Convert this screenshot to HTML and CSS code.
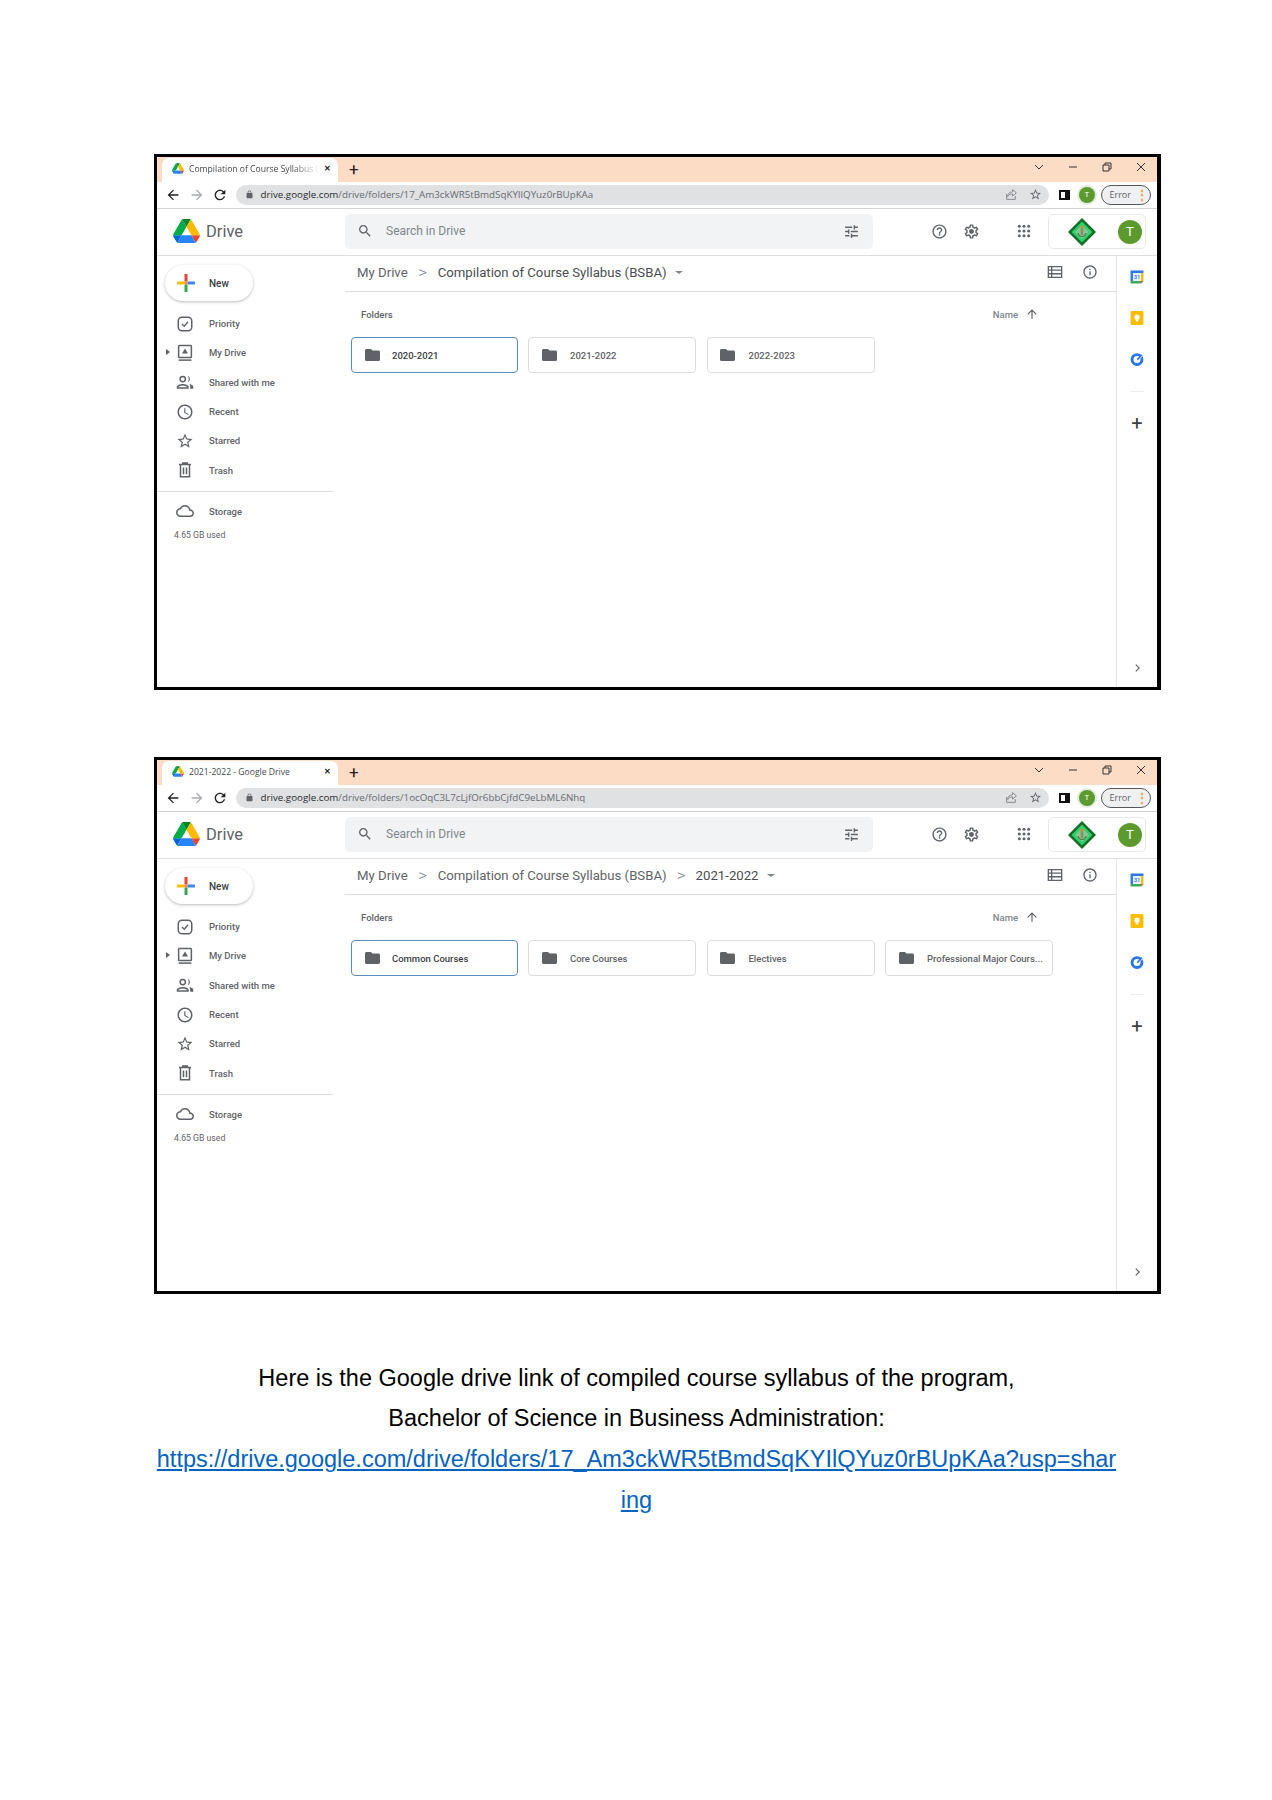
FILE: index.html
```html
<!DOCTYPE html>
<html lang="en">
<head>
    <meta charset="UTF-8">
    <meta name="viewport" content="width=device-width, initial-scale=1.0">
    <title>Course Syllabus</title>
    <link rel="stylesheet" href="styles.css">
</head>
<body>
    <!-- Shared icons -->
    <svg class="icon-defs" xmlns="http://www.w3.org/2000/svg">
        <symbol id="i-drive" viewBox="0 0 87.3 78">
            <path d="m6.6 66.85 3.85 6.65c.8 1.4 1.95 2.5 3.3 3.3l13.75-23.8h-27.5c0 1.55.4 3.1 1.2 4.5z" fill="#0066da"/>
            <path d="m43.65 25-13.75-23.8c-1.35.8-2.5 1.9-3.3 3.3l-25.4 44a9.06 9.06 0 0 0 -1.2 4.5h27.5z" fill="#00ac47"/>
            <path d="m73.55 76.8c1.35-.8 2.5-1.9 3.3-3.3l1.6-2.75 7.65-13.25c.8-1.4 1.2-2.95 1.2-4.5h-27.502l5.852 11.5z" fill="#ea4335"/>
            <path d="m43.65 25 13.75-23.8c-1.35-.8-2.9-1.2-4.5-1.2h-18.5c-1.6 0-3.15.45-4.5 1.2z" fill="#00832d"/>
            <path d="m59.8 53h-32.3l-13.75 23.8c1.35.8 2.9 1.2 4.5 1.2h50.8c1.6 0 3.15-.45 4.5-1.2z" fill="#2684fc"/>
            <path d="m73.4 26.5-12.7-22c-.8-1.4-1.95-2.5-3.3-3.3l-13.75 23.8 16.15 28h27.45c0-1.55-.4-3.1-1.2-4.5z" fill="#ffba00"/>
        </symbol>
        <symbol id="i-back" viewBox="0 0 24 24"><path d="M20 11H7.83l5.59-5.59L12 4l-8 8 8 8 1.41-1.41L7.83 13H20v-2z"/></symbol>
        <symbol id="i-forward" viewBox="0 0 24 24"><path d="M12 4l-1.41 1.41L16.17 11H4v2h12.17l-5.58 5.59L12 20l8-8z"/></symbol>
        <symbol id="i-reload" viewBox="0 0 24 24"><path d="M17.65 6.35C16.2 4.9 14.21 4 12 4c-4.42 0-7.99 3.58-7.99 8s3.57 8 7.99 8c3.73 0 6.84-2.55 7.73-6h-2.08c-.82 2.33-3.04 4-5.65 4-3.31 0-6-2.69-6-6s2.69-6 6-6c1.66 0 3.14.69 4.22 1.78L13 11h7V4l-2.35 2.35z"/></symbol>
        <symbol id="i-lock" viewBox="0 0 24 24"><path d="M18 8h-1V6c0-2.76-2.24-5-5-5S7 3.24 7 6v2H6c-1.1 0-2 .9-2 2v10c0 1.1.9 2 2 2h12c1.1 0 2-.9 2-2V10c0-1.1-.9-2-2-2zM9 6c0-1.66 1.34-3 3-3s3 1.34 3 3v2H9V6z"/></symbol>
        <symbol id="i-share" viewBox="0 0 24 24"><path d="M3 11v10h16v-6M14 3l7 6-7 6v-4c-4 0-7 1-9 5 0-6 3-8 9-9z" fill="none" stroke="currentColor" stroke-width="1.8"/></symbol>
        <symbol id="i-star" viewBox="0 0 24 24"><path d="M22 9.24l-7.19-.62L12 2 9.19 8.63 2 9.24l5.46 4.73L5.82 21 12 17.27 18.18 21l-1.63-7.03L22 9.24zM12 15.4l-3.76 2.27 1-4.28-3.32-2.88 4.38-.38L12 6.1l1.71 4.04 4.38.38-3.32 2.88 1 4.28L12 15.4z"/></symbol>
        <symbol id="i-search" viewBox="0 0 24 24"><path d="M15.5 14h-.79l-.28-.27C15.41 12.59 16 11.11 16 9.5 16 5.91 13.09 3 9.5 3S3 5.91 3 9.5 5.91 16 9.5 16c1.61 0 3.09-.59 4.23-1.57l.27.28v.79l5 4.99L20.49 19l-4.99-5zm-6 0C7.01 14 5 11.99 5 9.5S7.01 5 9.5 5 14 7.01 14 9.5 11.99 14 9.5 14z"/></symbol>
        <symbol id="i-tune" viewBox="0 0 24 24"><path d="M3 17v2h6v-2H3zM3 5v2h10V5H3zm10 16v-2h8v-2h-8v-2h-2v6h2zM7 9v2H3v2h4v2h2V9H7zm14 4v-2H11v2h10zm-6-4h2V7h4V5h-4V3h-2v6z"/></symbol>
        <symbol id="i-help" viewBox="0 0 24 24"><path d="M11 18h2v-2h-2v2zm1-16C6.48 2 2 6.48 2 12s4.48 10 10 10 10-4.48 10-10S17.52 2 12 2zm0 18c-4.41 0-8-3.59-8-8s3.59-8 8-8 8 3.59 8 8-3.59 8-8 8zm0-14c-2.21 0-4 1.79-4 4h2c0-1.1.9-2 2-2s2 .9 2 2c0 2-3 1.75-3 5h2c0-2.25 3-2.5 3-5 0-2.21-1.79-4-4-4z"/></symbol>
        <symbol id="i-gear" viewBox="0 0 24 24"><path d="M19.43 12.98c.04-.32.07-.64.07-.98 0-.34-.03-.66-.07-.98l2.11-1.65c.19-.15.24-.42.12-.64l-2-3.46c-.09-.16-.26-.25-.44-.25-.06 0-.12.01-.17.03l-2.49 1c-.52-.4-1.08-.73-1.69-.98l-.38-2.65C14.46 2.18 14.25 2 14 2h-4c-.25 0-.46.18-.49.42l-.38 2.65c-.61.25-1.17.59-1.69.98l-2.49-1c-.06-.02-.12-.03-.18-.03-.17 0-.34.09-.43.25l-2 3.46c-.13.22-.07.49.12.64l2.11 1.65c-.04.32-.07.65-.07.98 0 .33.03.66.07.98l-2.11 1.65c-.19.15-.24.42-.12.64l2 3.46c.09.16.26.25.44.25.06 0 .12-.01.17-.03l2.49-1c.52.4 1.08.73 1.69.98l.38 2.65c.03.24.24.42.49.42h4c.25 0 .46-.18.49-.42l.38-2.65c.61-.25 1.17-.59 1.69-.98l2.49 1c.06.02.12.03.18.03.17 0 .34-.09.43-.25l2-3.46c.12-.22.07-.49-.12-.64l-2.11-1.65zm-1.98-1.71c.04.31.05.52.05.73 0 .21-.02.43-.05.73l-.14 1.13.89.7 1.08.84-.7 1.21-1.27-.51-1.04-.42-.9.68c-.43.32-.84.56-1.25.73l-1.06.43-.16 1.13-.2 1.35h-1.4l-.19-1.35-.16-1.13-1.06-.43c-.43-.18-.83-.41-1.23-.71l-.91-.7-1.06.43-1.27.51-.7-1.21 1.08-.84.89-.7-.14-1.13c-.03-.31-.05-.54-.05-.74s.02-.43.05-.73l.14-1.13-.89-.7-1.08-.84.7-1.21 1.27.51 1.04.42.9-.68c.43-.32.84-.56 1.25-.73l1.06-.43.16-1.13.2-1.35h1.39l.19 1.35.16 1.13 1.06.43c.43.18.83.41 1.23.71l.91.7 1.06-.43 1.27-.51.7 1.21-1.07.85-.89.7.14 1.13zM12 8.5a3.5 3.5 0 1 0 0 7 3.5 3.5 0 0 0 0-7z"/></symbol>
        <symbol id="i-apps" viewBox="0 0 24 24">
            <circle cx="4" cy="4" r="2.6"/><circle cx="12" cy="4" r="2.6"/><circle cx="20" cy="4" r="2.6"/>
            <circle cx="4" cy="12" r="2.6"/><circle cx="12" cy="12" r="2.6"/><circle cx="20" cy="12" r="2.6"/>
            <circle cx="4" cy="20" r="2.6"/><circle cx="12" cy="20" r="2.6"/><circle cx="20" cy="20" r="2.6"/>
        </symbol>
        <symbol id="i-badge" viewBox="0 0 28 28">
            <path d="M14 0l14 14-14 14L0 14z" fill="#146c25"/>
            <path d="M14 3.500L24.500 14 14 24.500 3.500 14z" fill="#2bd06a"/>
            <path d="M14 7l7 7-7 7-7-7z" fill="#7fc98f"/>
            <path d="M12.700 9.500h2.600v7.500h-2.600z" fill="#8e8a66"/>
            <path d="M10 15c.5 2.500 2 3.500 4 3.500s3.500-1 4-3.500" fill="none" stroke="#5f6f4a" stroke-width="1.200"/>
            <circle cx="14" cy="9" r="1.500" fill="#e08a1e"/>
        </symbol>
        <symbol id="i-plus" viewBox="0 0 24 24">
            <path d="M14 14v10h-4V14z" fill="#34a853"/>
            <path d="M10 10V0h4v10z" fill="#ea4335"/>
            <path d="M10 10H0v4h10z" fill="#fbbc04"/>
            <path d="M14 10h10v4H14z" fill="#4285f4"/>
            <path d="M10 10h4v4h-4z" fill="#ea8a35"/>
        </symbol>
        <symbol id="i-priority" viewBox="0 0 24 24"><rect x="3" y="3" width="18" height="18" rx="5" fill="none" stroke="currentColor" stroke-width="2"/><path d="M8 12l3 3 5-6" fill="none" stroke="currentColor" stroke-width="1.800"/></symbol>
        <symbol id="i-mydrive" viewBox="0 0 24 24"><rect x="3.500" y="2" width="17" height="16" rx="1" fill="none" stroke="currentColor" stroke-width="2"/><path d="M3.500 21.500h17" stroke="currentColor" stroke-width="2"/><path d="M12 6l4 6.500H8z"/></symbol>
        <symbol id="i-people" viewBox="0 0 24 24"><path d="M9 12.500a4.500 4.500 0 1 0 0-9 4.500 4.500 0 0 0 0 9zm0-7a2.500 2.500 0 1 1 0 5 2.500 2.500 0 0 1 0-5zM9 14.500c-3.200 0-8 1.600-8 4.200V21h16v-2.300c0-2.600-4.800-4.200-8-4.200zM3 19v-.3c.4-.8 3.400-2.200 6-2.200s5.600 1.400 6 2.200v.3zM15.500 3.600c1.900.5 3 2.400 3 4.400s-1.100 3.900-3 4.400c.9-1.100 1.500-2.700 1.500-4.400s-.6-3.300-1.500-4.400zM18 14.800c2.600.6 5 1.800 5 3.900V21h-4v-2.300c0-1.500-.3-2.800-1-3.900z"/></symbol>
        <symbol id="i-clock" viewBox="0 0 24 24"><path d="M11.990 2C6.470 2 2 6.480 2 12s4.470 10 9.990 10C17.520 22 22 17.520 22 12S17.520 2 11.990 2zM12 20c-4.420 0-8-3.580-8-8s3.580-8 8-8 8 3.580 8 8-3.580 8-8 8zm.5-13H11v6l5.250 3.150.75-1.230-4.500-2.670z"/></symbol>
        <symbol id="i-trash" viewBox="0 0 24 24"><path d="M4 4.500h16M9 4.500V2.500h6v2M6 4.500v16.500h12V4.500M10 8.500v9M14 8.500v9" fill="none" stroke="currentColor" stroke-width="2"/></symbol>
        <symbol id="i-cloud" viewBox="0 0 24 24"><path d="M19.350 10.040C18.670 6.590 15.640 4 12 4 9.110 4 6.600 5.640 5.350 8.040 2.340 8.360 0 10.910 0 14c0 3.310 2.690 6 6 6h13c2.760 0 5-2.240 5-5 0-2.640-2.050-4.780-4.650-4.960zM19 18H6c-2.210 0-4-1.790-4-4 0-2.050 1.530-3.760 3.560-3.970l1.070-.11.500-.95C8.080 7.140 9.940 6 12 6c2.620 0 4.880 1.860 5.390 4.430l.3 1.500 1.530.11c1.560.1 2.780 1.410 2.780 2.960 0 1.650-1.350 3-3 3z"/></symbol>
        <symbol id="i-folder" viewBox="0 0 20 16"><path d="M8 0H2C.9 0 0 .9 0 2v12c0 1.100.9 2 2 2h16c1.100 0 2-.9 2-2V4c0-1.100-.9-2-2-2h-8z"/></symbol>
        <symbol id="i-list" viewBox="0 0 24 24"><path d="M2 4h20v16H2zM2 9.300h20M2 14.600h20M7 4v16" fill="none" stroke="currentColor" stroke-width="2"/></symbol>
        <symbol id="i-info" viewBox="0 0 24 24"><path d="M11 7h2v2h-2zm0 4h2v6h-2zm1-9C6.480 2 2 6.480 2 12s4.480 10 10 10 10-4.480 10-10S17.520 2 12 2zm0 18c-4.410 0-8-3.590-8-8s3.590-8 8-8 8 3.590 8 8-3.590 8-8 8z"/></symbol>
        <symbol id="i-up" viewBox="0 0 24 24"><path d="M4 12l1.410 1.410L11 7.830V20h2V7.830l5.580 5.590L20 12l-8-8-8 8z"/></symbol>
        <symbol id="i-more" viewBox="0 0 24 24"><path d="M7 3l2.500-2.500L21 12 9.500 23.500 7 21l9-9z"/></symbol>
        <symbol id="i-calendar" viewBox="0 0 24 24">
            <path d="M1 1h22v22H1z" fill="#e8f0fe"/>
            <path d="M1 1h22v4H1zM1 5h4v14H1z" fill="#2a77e6"/>
            <path d="M19 5h4v14h-4z" fill="#fbbc04"/>
            <path d="M1 19h18v4H1z" fill="#34a853"/>
            <path d="M19 19h4l-4 4z" fill="#ea4335"/>
            <text x="12" y="16" text-anchor="middle" class="cal-day">31</text>
        </symbol>
        <symbol id="i-keep" viewBox="0 0 24 24">
            <rect x="1" y="0" width="22" height="24" rx="2" fill="#fbbc04"/>
            <circle cx="12" cy="10.500" r="4.500" fill="#fff"/>
            <path d="M10 15h4v3h-4z" fill="#fff"/>
        </symbol>
        <symbol id="i-tasks" viewBox="0 0 24 24">
            <circle cx="12" cy="13" r="8.500" fill="none" stroke="#2a77e6" stroke-width="5"/>
            <path d="M8 13l3.500 3.500L23 4" fill="none" stroke="#fff" stroke-width="2"/>
            <path d="M11.500 12l2 2 8-8.500-2-1.500z" fill="#2a77e6"/>
        </symbol>
    </svg>

    <div class="page">
        <!-- First screenshot -->
        <section class="frame">
            <div class="tab-strip">
                <div class="tab">
                    <svg class="tab-icon"><use href="#i-drive"/></svg>
                    <span class="tab-title tab-fade">Compilation of Course Syllabus (</span>
                    <span class="tab-close">✕</span>
                </div>
                <span class="new-tab">+</span>
                <div class="window-btns">
                    <svg class="win-icon" viewBox="0 0 12 12"><path d="M2 4l4 4 4-4"/></svg>
                    <svg class="win-icon" viewBox="0 0 12 12"><path d="M2 6h8"/></svg>
                    <svg class="win-icon" viewBox="0 0 12 12"><path d="M2 4h6v6H2zM4 4V2h6v6H8"/></svg>
                    <svg class="win-icon" viewBox="0 0 12 12"><path d="M2 2l8 8M10 2l-8 8"/></svg>
                </div>
            </div>
            <div class="toolbar">
                <svg class="nav-icon"><use href="#i-back"/></svg>
                <svg class="nav-icon off"><use href="#i-forward"/></svg>
                <svg class="nav-icon"><use href="#i-reload"/></svg>
                <div class="omnibox">
                    <svg class="lock-icon"><use href="#i-lock"/></svg>
                    <span class="url"><b>drive.google.com</b>/drive/folders/17_Am3ckWR5tBmdSqKYIlQYuz0rBUpKAa</span>
                    <svg class="omni-icon share"><use href="#i-share"/></svg>
                    <svg class="omni-icon"><use href="#i-star"/></svg>
                </div>
                <span class="side-panel"></span>
                <span class="chrome-avatar">T</span>
                <div class="error-pill">Error <span class="dots">⋮</span></div>
            </div>
            <header class="appbar">
                <div class="brand">
                    <svg class="drive-logo"><use href="#i-drive"/></svg>
                    <span>Drive</span>
                </div>
                <div class="search">
                    <svg class="search-icon"><use href="#i-search"/></svg>
                    <span class="search-text">Search in Drive</span>
                    <svg class="tune-icon"><use href="#i-tune"/></svg>
                </div>
                <svg class="bar-icon help"><use href="#i-help"/></svg>
                <svg class="bar-icon gear"><use href="#i-gear"/></svg>
                <svg class="bar-icon apps"><use href="#i-apps"/></svg>
                <div class="account">
                    <svg class="badge"><use href="#i-badge"/></svg>
                    <span class="avatar">T</span>
                </div>
            </header>
            <div class="workspace">
                <aside class="sidebar">
                    <div class="new-btn">
                        <svg class="plus-icon"><use href="#i-plus"/></svg>
                        <span>New</span>
                    </div>
                    <nav class="nav">
                        <a class="nav-item"><svg><use href="#i-priority"/></svg>Priority</a>
                        <a class="nav-item caret"><svg><use href="#i-mydrive"/></svg>My Drive</a>
                        <a class="nav-item"><svg><use href="#i-people"/></svg>Shared with me</a>
                        <a class="nav-item"><svg><use href="#i-clock"/></svg>Recent</a>
                        <a class="nav-item"><svg><use href="#i-star"/></svg>Starred</a>
                        <a class="nav-item"><svg><use href="#i-trash"/></svg>Trash</a>
                    </nav>
                    <div class="storage">
                        <a class="nav-item"><svg><use href="#i-cloud"/></svg>Storage</a>
                        <p class="used">4.65 GB used</p>
                    </div>
                </aside>
                <main class="content">
                    <div class="crumbs">
                        <span class="crumb">My Drive</span>
                        <span class="crumb-sep">&gt;</span>
                        <span class="crumb current">Compilation of Course Syllabus (BSBA)</span>
                        <span class="crumb-caret"></span>
                        <svg class="crumb-icon list"><use href="#i-list"/></svg>
                        <svg class="crumb-icon info"><use href="#i-info"/></svg>
                    </div>
                    <div class="list-head">
                        <span class="folders-label">Folders</span>
                        <span class="sort">Name <svg class="sort-icon"><use href="#i-up"/></svg></span>
                    </div>
                    <div class="folder-grid">
                        <div class="folder selected"><svg><use href="#i-folder"/></svg><span>2020-2021</span></div>
                        <div class="folder"><svg><use href="#i-folder"/></svg><span>2021-2022</span></div>
                        <div class="folder"><svg><use href="#i-folder"/></svg><span>2022-2023</span></div>
                    </div>
                </main>
                <aside class="rail">
                    <svg class="rail-icon"><use href="#i-calendar"/></svg>
                    <svg class="rail-icon"><use href="#i-keep"/></svg>
                    <svg class="rail-icon"><use href="#i-tasks"/></svg>
                    <span class="rail-sep"></span>
                    <span class="rail-plus">+</span>
                    <svg class="rail-more"><use href="#i-more"/></svg>
                </aside>
            </div>
        </section>

        <!-- Second screenshot -->
        <section class="frame tall">
            <div class="tab-strip">
                <div class="tab">
                    <svg class="tab-icon"><use href="#i-drive"/></svg>
                    <span class="tab-title">2021-2022 - Google Drive</span>
                    <span class="tab-close">✕</span>
                </div>
                <span class="new-tab">+</span>
                <div class="window-btns">
                    <svg class="win-icon" viewBox="0 0 12 12"><path d="M2 4l4 4 4-4"/></svg>
                    <svg class="win-icon" viewBox="0 0 12 12"><path d="M2 6h8"/></svg>
                    <svg class="win-icon" viewBox="0 0 12 12"><path d="M2 4h6v6H2zM4 4V2h6v6H8"/></svg>
                    <svg class="win-icon" viewBox="0 0 12 12"><path d="M2 2l8 8M10 2l-8 8"/></svg>
                </div>
            </div>
            <div class="toolbar">
                <svg class="nav-icon"><use href="#i-back"/></svg>
                <svg class="nav-icon off"><use href="#i-forward"/></svg>
                <svg class="nav-icon"><use href="#i-reload"/></svg>
                <div class="omnibox">
                    <svg class="lock-icon"><use href="#i-lock"/></svg>
                    <span class="url"><b>drive.google.com</b>/drive/folders/1ocOqC3L7cLjfOr6bbCjfdC9eLbML6Nhq</span>
                    <svg class="omni-icon share"><use href="#i-share"/></svg>
                    <svg class="omni-icon"><use href="#i-star"/></svg>
                </div>
                <span class="side-panel"></span>
                <span class="chrome-avatar">T</span>
                <div class="error-pill">Error <span class="dots">⋮</span></div>
            </div>
            <header class="appbar">
                <div class="brand">
                    <svg class="drive-logo"><use href="#i-drive"/></svg>
                    <span>Drive</span>
                </div>
                <div class="search">
                    <svg class="search-icon"><use href="#i-search"/></svg>
                    <span class="search-text">Search in Drive</span>
                    <svg class="tune-icon"><use href="#i-tune"/></svg>
                </div>
                <svg class="bar-icon help"><use href="#i-help"/></svg>
                <svg class="bar-icon gear"><use href="#i-gear"/></svg>
                <svg class="bar-icon apps"><use href="#i-apps"/></svg>
                <div class="account">
                    <svg class="badge"><use href="#i-badge"/></svg>
                    <span class="avatar">T</span>
                </div>
            </header>
            <div class="workspace">
                <aside class="sidebar">
                    <div class="new-btn">
                        <svg class="plus-icon"><use href="#i-plus"/></svg>
                        <span>New</span>
                    </div>
                    <nav class="nav">
                        <a class="nav-item"><svg><use href="#i-priority"/></svg>Priority</a>
                        <a class="nav-item caret"><svg><use href="#i-mydrive"/></svg>My Drive</a>
                        <a class="nav-item"><svg><use href="#i-people"/></svg>Shared with me</a>
                        <a class="nav-item"><svg><use href="#i-clock"/></svg>Recent</a>
                        <a class="nav-item"><svg><use href="#i-star"/></svg>Starred</a>
                        <a class="nav-item"><svg><use href="#i-trash"/></svg>Trash</a>
                    </nav>
                    <div class="storage">
                        <a class="nav-item"><svg><use href="#i-cloud"/></svg>Storage</a>
                        <p class="used">4.65 GB used</p>
                    </div>
                </aside>
                <main class="content">
                    <div class="crumbs">
                        <span class="crumb">My Drive</span>
                        <span class="crumb-sep">&gt;</span>
                        <span class="crumb">Compilation of Course Syllabus (BSBA)</span>
                        <span class="crumb-sep second">&gt;</span>
                        <span class="crumb current">2021-2022</span>
                        <span class="crumb-caret"></span>
                        <svg class="crumb-icon list"><use href="#i-list"/></svg>
                        <svg class="crumb-icon info"><use href="#i-info"/></svg>
                    </div>
                    <div class="list-head">
                        <span class="folders-label">Folders</span>
                        <span class="sort">Name <svg class="sort-icon"><use href="#i-up"/></svg></span>
                    </div>
                    <div class="folder-grid">
                        <div class="folder selected"><svg><use href="#i-folder"/></svg><span>Common Courses</span></div>
                        <div class="folder"><svg><use href="#i-folder"/></svg><span>Core Courses</span></div>
                        <div class="folder"><svg><use href="#i-folder"/></svg><span>Electives</span></div>
                        <div class="folder"><svg><use href="#i-folder"/></svg><span>Professional Major Cours...</span></div>
                    </div>
                </main>
                <aside class="rail">
                    <svg class="rail-icon"><use href="#i-calendar"/></svg>
                    <svg class="rail-icon"><use href="#i-keep"/></svg>
                    <svg class="rail-icon"><use href="#i-tasks"/></svg>
                    <span class="rail-sep"></span>
                    <span class="rail-plus">+</span>
                    <svg class="rail-more"><use href="#i-more"/></svg>
                </aside>
            </div>
        </section>

        <div class="note">
            <p>Here is the Google drive link of compiled course syllabus of the program,</p>
            <p>Bachelor of Science in Business Administration:</p>
            <p><a class="note-link">https://drive.google.com/drive/folders/17_Am3ckWR5tBmdSqKYIlQYuz0rBUpKAa?usp=sharing</a></p>
        </div>
    </div>
</body>
</html>
```

FILE: styles.css
```css
* {
    margin: 0;
    padding: 0;
    box-sizing: border-box;
}

body {
    font-family: 'Roboto', sans-serif;
    background: #fff;
    color: #5f6368;
}

.icon-defs {
    display: none;
}

.page {
    width: 1272px;
    min-height: 1800px;
    padding: 154px 111px 0 154px;
}

/* Screenshot frame */
.frame {
    width: 1007px;
    height: 536px;
    border: 3px solid #000;
    border-right-width: 4px;
    display: flex;
    flex-direction: column;
    margin-bottom: 67px;
    background: #fff;
}

.frame.tall {
    height: 537px;
    margin-bottom: 0;
}

.tab-strip {
    height: 25px;
    background: #fddcc6;
    display: flex;
    align-items: flex-end;
    padding-left: 5px;
    flex: none;
}

.tab {
    width: 176px;
    height: 24px;
    background: #fff;
    border-radius: 7px 7px 0 0;
    display: flex;
    align-items: center;
    padding: 0 0 3px 10px;
}

.tab-icon {
    width: 12px;
    height: 11px;
    flex: none;
}

.tab-title {
    font-family: 'Open Sans', sans-serif;
    font-size: 8.6px;
    color: #45494d;
    margin-left: 5px;
    width: 131px;
    white-space: nowrap;
}

.tab-fade {
    -webkit-mask-image: linear-gradient(to right, #000 80%, transparent 100%);
    mask-image: linear-gradient(to right, #000 80%, transparent 100%);
}

.tab-close {
    font-size: 8px;
    color: #222;
    margin-left: 4px;
    font-weight: bold;
}

.new-tab {
    font-size: 17px;
    font-weight: 400;
    color: #222;
    line-height: 22px;
    height: 24px;
    margin-left: 11px;
}

.window-btns {
    margin-left: auto;
    display: flex;
    align-items: center;
    gap: 22px;
    height: 19px;
    align-self: flex-start;
    padding-right: 10px;
}

.win-icon {
    width: 12px;
    height: 12px;
    fill: none;
    stroke: #333;
    stroke-width: 1;
}

.toolbar {
    height: 27px;
    border-bottom: 1px solid #d0d2d4;
    display: flex;
    align-items: center;
    padding: 0 5px 1px 8px;
    flex: none;
}

.nav-icon {
    width: 16px;
    height: 16px;
    fill: #222;
    margin-right: 7.5px;
    flex: none;
}

.nav-icon.off {
    fill: #a5a8ab;
}

.omnibox {
    width: 813px;
    height: 20px;
    background: #e0e1e2;
    border-radius: 10px;
    display: flex;
    align-items: center;
    padding: 0 7px 0 9px;
    flex: none;
}

.lock-icon {
    width: 9px;
    height: 9px;
    fill: #5f6368;
    flex: none;
}

.url {
    font-family: 'Open Sans', sans-serif;
    font-size: 9.77px;
    color: #676b70;
    margin-left: 7px;
    white-space: nowrap;
}

.url b {
    font-weight: 400;
    color: #2a2c2f;
}

.omni-icon {
    width: 13px;
    height: 13px;
    fill: #5f6368;
    margin-left: 11px;
    flex: none;
}

.omni-icon.share {
    margin-left: auto;
    color: #85888c;
}

.side-panel {
    width: 11px;
    height: 10px;
    border: 2px solid #111;
    border-right-width: 5px;
    margin-left: 10px;
    flex: none;
}

.chrome-avatar {
    width: 16px;
    height: 16px;
    border-radius: 50%;
    background: #5d9a2e;
    color: #fff;
    font-size: 8px;
    line-height: 16px;
    text-align: center;
    margin-left: 9.5px;
    box-shadow: 0 0 0 2px #e4ebe0;
    flex: none;
}

.error-pill {
    width: 50px;
    height: 20px;
    border: 1px solid #55585b;
    border-radius: 10px;
    background: #eef0f1;
    font-family: 'Open Sans', sans-serif;
    font-size: 9px;
    line-height: 18px;
    color: #5f6368;
    padding-left: 8px;
    margin-left: 5.5px;
    display: flex;
    justify-content: space-between;
    flex: none;
}

.dots {
    color: #e8a33a;
    font-weight: bold;
    font-size: 12px;
    padding-right: 2px;
}

/* Drive header */
.appbar {
    height: 47px;
    border-bottom: 1px solid #dcdee0;
    display: flex;
    align-items: center;
    padding-left: 16px;
    padding-bottom: 2px;
    flex: none;
}

.brand {
    width: 172px;
    display: flex;
    align-items: center;
    font-size: 16.5px;
    color: #5f6368;
    gap: 6px;
    flex: none;
}

.drive-logo {
    width: 27px;
    height: 24px;
}

.search {
    width: 528px;
    height: 35px;
    background: #f1f3f4;
    border-radius: 5px;
    display: flex;
    align-items: center;
    padding: 0 13px 0 12px;
    flex: none;
}

.search-icon {
    width: 16px;
    height: 16px;
    fill: #5f6368;
}

.search-text {
    font-size: 12px;
    color: #80868b;
    margin-left: 13px;
}

.tune-icon {
    width: 17px;
    height: 17px;
    fill: #5f6368;
    margin-left: auto;
}

.bar-icon {
    width: 17px;
    height: 17px;
    fill: #5f6368;
    flex: none;
}

.bar-icon.help {
    margin-left: 58px;
}

.bar-icon.gear {
    margin-left: 15px;
}

.bar-icon.apps {
    width: 14px;
    height: 14px;
    margin-left: 37px;
}

.account {
    width: 98px;
    height: 35px;
    border: 1px solid #e6e8ea;
    border-radius: 5px;
    margin-left: 17px;
    display: flex;
    align-items: center;
    padding: 2px 0 0 19px;
    flex: none;
}

.badge {
    width: 28px;
    height: 28px;
}

.avatar {
    width: 24px;
    height: 24px;
    border-radius: 50%;
    background: #5d9a2e;
    color: #fff;
    font-size: 13px;
    line-height: 24px;
    text-align: center;
    margin-left: 22px;
}

/* Workspace */
.workspace {
    flex: 1;
    display: flex;
    min-height: 0;
}

.sidebar {
    width: 176px;
    padding-top: 9px;
    flex: none;
}

.new-btn {
    width: 88px;
    height: 36px;
    margin-left: 8px;
    border-radius: 18px;
    background: #fff;
    box-shadow: 0 1px 3px rgba(60, 64, 67, 0.35);
    display: flex;
    align-items: center;
    padding-left: 12px;
    font-size: 10px;
    font-weight: 500;
    color: #3c4043;
}

.plus-icon {
    width: 18px;
    height: 18px;
    margin-right: 14px;
}

.nav {
    margin-top: 8px;
    padding-bottom: 6px;
    border-bottom: 1px solid #dcdee0;
}

.nav-item {
    height: 29.300px;
    display: flex;
    align-items: center;
    padding-left: 19px;
    font-size: 9.500px;
    font-weight: 500;
    color: #5f6368;
    position: relative;
}

.nav-item svg {
    width: 18px;
    height: 18px;
    fill: #5f6368;
    color: #5f6368;
    margin-right: 15px;
    flex: none;
}

.caret::before {
    content: "";
    position: absolute;
    left: 9px;
    top: 11px;
    border-left: 4px solid #5f6368;
    border-top: 3.500px solid transparent;
    border-bottom: 3.500px solid transparent;
}

.storage {
    padding-top: 5px;
}

.used {
    font-size: 8.700px;
    color: #5f6368;
    padding: 4px 0 0 17px;
}

.content {
    flex: 1;
    min-width: 0;
    padding-left: 12px;
}

.crumbs {
    height: 36px;
    border-bottom: 1px solid #dcdee0;
    display: flex;
    align-items: center;
    padding: 0 0 3px 12px;
}

.crumb {
    font-size: 13.200px;
    color: #5f6368;
}

.crumb.current {
    color: #4a4e52;
}

.crumb-sep {
    font-size: 17px;
    font-weight: 300;
    color: #7a7e83;
    width: 30px;
    text-align: center;
}

.crumb-sep.second {
    width: 29px;
}

.crumb-caret {
    margin-left: 8px;
    border-top: 3.500px solid #80868b;
    border-left: 4px solid transparent;
    border-right: 4px solid transparent;
}

.crumb-icon {
    width: 16px;
    height: 16px;
    fill: #5f6368;
    color: #5f6368;
    flex: none;
}

.crumb-icon.list {
    margin-left: auto;
}

.crumb-icon.info {
    margin-left: 19px;
    margin-right: 18px;
}

.list-head {
    height: 45px;
    display: flex;
    align-items: center;
    justify-content: space-between;
    padding: 0 77px 0 16px;
}

.folders-label {
    font-size: 9.500px;
    font-weight: 500;
    color: #5f6368;
}

.sort {
    font-size: 9.500px;
    font-weight: 500;
    color: #80868b;
    display: flex;
    align-items: center;
    padding-bottom: 1px;
}

.sort-icon {
    width: 14px;
    height: 14px;
    fill: #5f6368;
    margin-left: 7px;
}

.folder-grid {
    display: flex;
    gap: 10.5px;
    padding-left: 6px;
}

.folder {
    width: 168px;
    height: 36px;
    border: 1px solid #dadce0;
    border-radius: 4px;
    display: flex;
    align-items: center;
    padding-left: 12.5px;
    font-size: 9.500px;
    font-weight: 500;
    color: #5f6368;
}

.folder.selected {
    width: 166.5px;
    border-color: #5a8cc4;
    color: #3c4043;
}

.folder svg {
    width: 15px;
    height: 12px;
    fill: #5f6368;
    margin-right: 13.500px;
    flex: none;
}

.folder.selected svg {
    margin-right: 12.500px;
}

.rail {
    width: 41px;
    border-left: 1px solid #e4e6e8;
    display: flex;
    flex-direction: column;
    align-items: center;
    padding-top: 14px;
    flex: none;
}

.rail-icon {
    width: 14px;
    height: 14px;
    margin-bottom: 27px;
}

.cal-day {
    font-family: 'Roboto', sans-serif;
    font-size: 10px;
    font-weight: 500;
    fill: #2a77e6;
}

.rail-sep {
    width: 14px;
    height: 1px;
    background: #eceef0;
    margin-top: -2px;
}

.rail-plus {
    font-size: 20px;
    font-weight: 400;
    color: #3c4043;
    line-height: 24px;
    margin-top: 19px;
}

.rail-more {
    width: 8px;
    height: 8px;
    fill: #5f6368;
    margin-top: auto;
    margin-bottom: 15px;
}

/* Text under the screenshots */
.note {
    width: 963px;
    margin-left: 1px;
    margin-top: 63.500px;
    font-family: 'Liberation Sans', Arial, sans-serif;
    font-size: 23.5px;
    line-height: 40.800px;
    color: #000;
    text-align: center;
}

.note-link {
    color: #0563c1;
    text-decoration: underline;
    word-break: break-all;
}
```
